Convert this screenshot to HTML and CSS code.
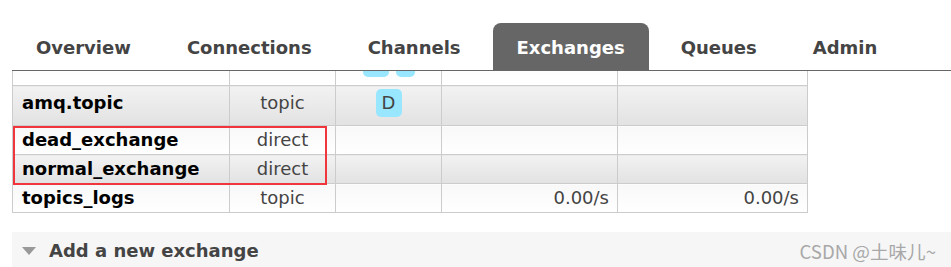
FILE: index.html
```html
<!DOCTYPE html>
<html>
<head>
  <meta charset="utf-8">
  <title>Exchanges</title>
  <link rel="stylesheet" href="styles.css">
</head>
<body>
<div class="page">

  <ul class="tabs">
    <li>Overview</li>
    <li>Connections</li>
    <li>Channels</li>
    <li class="active">Exchanges</li>
    <li>Queues</li>
    <li>Admin</li>
  </ul>

  <div class="listing">
    <table class="list">
      <colgroup>
        <col class="c-name"><col class="c-type"><col class="c-feat"><col class="c-in"><col class="c-out">
      </colgroup>
      <!-- row scrolled mostly out of view, only its badges peek in -->
      <tr class="alt2 tall">
        <td class="name"></td>
        <td class="type"></td>
        <td class="feat"><span class="badge">D</span><span class="badge narrow">I</span></td>
        <td class="rate"></td>
        <td class="rate"></td>
      </tr>
      <tr class="alt1 tall">
        <td class="name">amq.topic</td>
        <td class="type">topic</td>
        <td class="feat"><span class="badge">D</span></td>
        <td class="rate"></td>
        <td class="rate"></td>
      </tr>
      <tr class="alt2">
        <td class="name">dead_exchange</td>
        <td class="type">direct</td>
        <td class="feat"></td>
        <td class="rate"></td>
        <td class="rate"></td>
      </tr>
      <tr class="alt1">
        <td class="name">normal_exchange</td>
        <td class="type">direct</td>
        <td class="feat"></td>
        <td class="rate"></td>
        <td class="rate"></td>
      </tr>
      <tr class="alt2">
        <td class="name">topics_logs</td>
        <td class="type">topic</td>
        <td class="feat"></td>
        <td class="rate">0.00/s</td>
        <td class="rate">0.00/s</td>
      </tr>
    </table>
    <!-- red highlight drawn over the two rows -->
    <div class="mark"></div>
  </div>

  <div class="section">
    <span class="arrow"></span>
    <h2>Add a new exchange</h2>
  </div>

  <div class="watermark">CSDN @土味儿~</div>
</div>
</body>
</html>
```

FILE: styles.css
```css
body { margin:0; background:#fff; font-family:"DejaVu Sans", Verdana, sans-serif; font-size:18px; color:#444; }

.page { position:relative; padding-left:12px; height:267px; overflow:hidden; }

/* ---- tabs ---- */
.tabs { list-style:none; margin:0; padding:23px 0 0 0; display:flex; gap:8px; border-bottom:1px solid #666; }
.tabs li { padding:14px 24px 11px 24px; line-height:22px; font-weight:bold; color:#444; border-radius:8px 8px 0 0; }
.tabs li.active { background:#666; color:#fff; }

/* ---- exchange list ---- */
.listing { position:relative; overflow:hidden; }
.list { border-collapse:collapse; table-layout:fixed; width:795px; margin-top:-26px; }
.c-name { width:217px; }
.c-type { width:106px; }
.c-feat { width:106px; }
.c-in   { width:176px; }
.c-out  { width:190px; }

.list td { border:1px solid #ccc; padding:3px 8px; line-height:22px; vertical-align:middle; white-space:nowrap; }
.list tr.tall td { padding-top:3px; padding-bottom:8px; }
.list tr.alt1 td { background:linear-gradient(#f2f2f2, #e2e2e2); }
.list tr.alt2 td { background:linear-gradient(#f8f8f8, #fff); }
.list td.name { font-weight:bold; color:#000; padding-left:9px; }
.list td.type { text-align:center; }
.list td.feat { text-align:center; }
.list td.rate { text-align:right; }

.badge { display:inline-block; width:26px; height:28px; line-height:28px; border-radius:5px; background:#99e7ff; color:#444; text-align:center; vertical-align:middle; }
.badge.narrow { width:19px; margin-left:7px; }

.mark { position:absolute; left:1px; top:55px; width:310px; height:55px; border:2px solid #f0353d; }

/* ---- add section ---- */
.section { margin-top:19px; background:#f6f6f6; display:flex; align-items:center; gap:13px; padding:8px 10px 8px 10px; }
.section h2 { margin:0; font-size:18px; line-height:22px; font-weight:bold; color:#444; }
.arrow { width:0; height:0; border-left:7.5px solid transparent; border-right:7.5px solid transparent; border-top:8px solid #999; }

.watermark { position:absolute; right:15px; top:237px; font-family:"Noto Sans CJK SC", sans-serif; font-size:18.6px; color:#a8a8a8; }
```
